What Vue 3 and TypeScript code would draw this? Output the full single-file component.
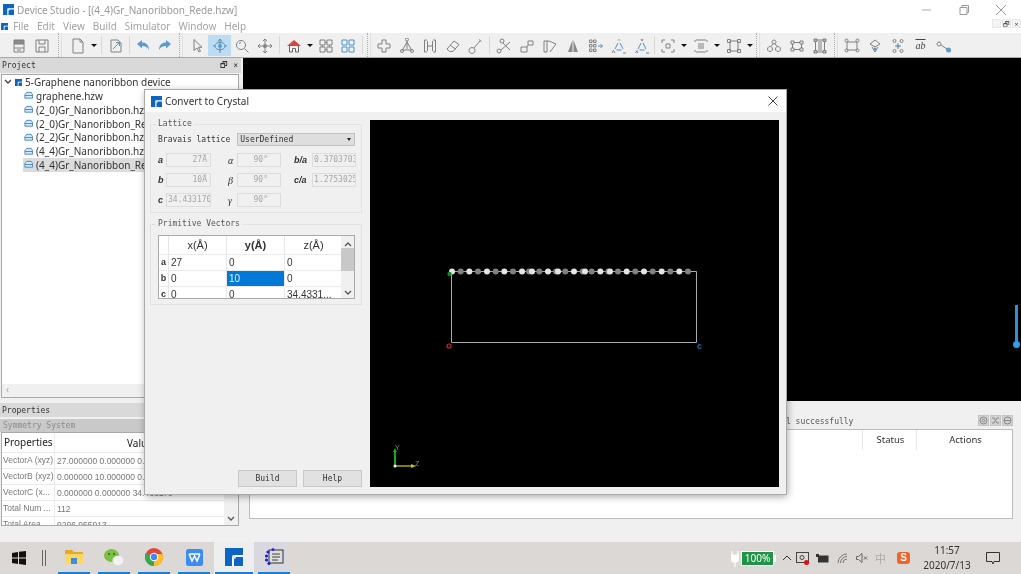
<script setup lang="ts">
type ToolItem = { k: 'b' | 'd' | 's' | 'g'; w: number; icon?: string; active?: boolean }

// 16x16 icon parts split by "|": grey stroke, blue stroke, blue fill, grey fill
const icons: Record<string, string> = {
  box: 'M3 2h10v12H3zM3 6h10M3 10h10M6 12h4|||M3 2h10v4H3z',
  save: 'M2 2h12v12H2zM5 2v4h6V2M5 14V9h6v5',
  doc: 'M3 1h7l3 3v11H3zM10 1v3h3',
  open: 'M3 2h7l3 3v9H3z|M5 11l6-6M8 4.500h3.500V8',
  undo: '||M2 6l5-4v2.500c4 0 7 2.500 7 7.500-1.500-3-3.500-4-7-4V10.500z',
  redo: '||M14 6L9 2v2.500c-4 0-7 2.500-7 7.500 1.500-3 3.500-4 7-4v2.500z',
  arrow: 'M5 1.500v11l3-2.500 2 4 1.500-.7-2-4h3.500z',
  rotate: 'M8 1v14M1 8h2M13 8h2M8 1L6 3.500M8 1l2 2.500|M3 8c0-5 10-5 10 0s-10 5-10 0z|M6 8a2 2 0 1 0 4 0a2 2 0 1 0-4 0z',
  zoom: 'M7 2.500a4.500 4.500 0 1 0 .01 0zM10.500 10.500l4 4|M5 6a2.500 2.500 0 0 1 2-1.500',
  move: 'M8 1v14M1 8h14M8 1L6 3M8 1l2 2M8 15l-2-2M8 15l2-2M1 8l2-2M1 8l2 2M15 8l-2-2M15 8l-2 2|||M6 8a2 2 0 1 0 4 0a2 2 0 1 0-4 0z',
  grid1: 'M2 2h5v5H2zM9 2h5v5H9zM2 9h5v5H2zM9 9h5v5H9zM7 4.500h2M7 11.500h2M4.500 7v2M11.500 7v2',
  grid2: '|M2 2h5v5H2zM9 2h5v5H9zM2 9h5v5H2zM9 9h5v5H9z',
  plus: 'M6 2h4v4h4v4h-4v4H6v-4H2V6h4z',
  mol: 'M8 3v8M8 4L3.500 12h9zM6.500 1.500a1.500 1.500 0 1 0 3 0a1.500 1.500 0 1 0-3 0M1.500 13a1.500 1.500 0 1 0 3 0a1.500 1.500 0 1 0-3 0M11.500 13a1.500 1.500 0 1 0 3 0a1.500 1.500 0 1 0-3 0',
  hh: 'M5 2H2.500v12H5M11 2h2.500v12H11M5.500 3v10M10.500 3v10M5.500 8h5',
  eraser: 'M2 11l7-8 5 3.500-6 7H4.500zM5.500 7.500l5 3.500',
  bond: 'M4 9.500a3 3 0 1 0 .01 0zM6 10l6-7M11 1.500l2.500 2',
  bond2: 'M1 13a2 2 0 1 0 4 0a2 2 0 1 0-4 0M5 12l9-8M4 3a2 2 0 1 0 4 0 2 2 0 1 0-4 0M7 5l7 7',
  sq2: 'M2 9h6v5H2zM9 3h5v4H9zM8 9l1-2',
  mirror: 'M2 3h3v11H2zM7 3l7 3-6 8M5 3h2',
  tri: '|||M7.500 2v12H3zM8.500 2v12H13z',
  spread: 'M1.500 2h2.500v2.500H1.500zM5.500 2H8v2.500H5.500zM1.500 6.500h2.500V9H1.500zM5.500 6.500H8V9H5.500zM1.500 11h2.500v2.500H1.500zM5.500 11H8v2.500H5.500z|M10 8h4.500M12.500 6l2 2-2 2',
  tria: 'M7 2.500l1-1 1 1M1 15l1.500-2.500 1.500 2.500M12 15h3|M7 5L4 11M9 5l3 6M5.500 12h5',
  triy: 'M7 1l1 2 1-2M1.500 15l2-2.500M2 12.500l2 2.500M12 15h3|M7 5L4 11M9 5l3 6M5.500 12h5',
  dash1: 'M2 2h3M11 2h3M2 14h3M11 14h3M2 2v3M14 2v3M2 11v3M14 11v3M6 6h4v4H6z',
  dash2: 'M3 2h10M3 14h10M2 2v2M14 2v2M2 12v2M14 12v2M5 6h6M5 8h6M5 10h6',
  frame: 'M4 3h8v10H4zM1.500 1.500h3v3h-3zM11.500 1.500h3v3h-3zM1.500 11.500h3v3h-3zM11.500 11.500h3v3h-3z',
  cluster: 'M8 2a2 2 0 1 0 .01 0zM4 8.500a2.500 2.500 0 1 0 .01 0zM12 8.500a2.500 2.500 0 1 0 .01 0zM7 5.500L5 8.500M9 5.500l2 3',
  hex: 'M2 3h3v3H2zM11 3h3v3h-3zM2 10h3v3H2zM11 10h3v3h-3zM5 4.500h6M5 11.500h6M3.500 6v4M12.500 6v4',
  pillars: 'M2 2h12M2 14h12M2 1h3v2.500H2zM11 1h3v2.500h-3zM2 12.500h3V15H2zM11 12.500h3V15h-3zM3.500 3.500v9M12.500 3.500v9M7 3v10M9 3v10',
  cell: 'M3 4h10v8H3zM1 2.500a1.500 1.500 0 1 0 3 0a1.500 1.500 0 1 0-3 0M12 2.500a1.500 1.500 0 1 0 3 0a1.500 1.500 0 1 0-3 0M1 12.500a1.500 1.500 0 1 0 3 0a1.500 1.500 0 1 0-3 0M12 12.500a1.500 1.500 0 1 0 3 0a1.500 1.500 0 1 0-3 0',
  bulb: 'M8 2L3 6l5 3 5-3zM5 9l3 5 3-5||M6.500 11a1.500 1.500 0 1 0 3 0a1.500 1.500 0 1 0-3 0',
  chain: 'M3 3a1.500 1.500 0 1 0 3 0a1.500 1.500 0 1 0-3 0M10 3a1.500 1.500 0 1 0 3 0a1.500 1.500 0 1 0-3 0M3 13a1.500 1.500 0 1 0 3 0a1.500 1.500 0 1 0-3 0M10 13a1.500 1.500 0 1 0 3 0a1.500 1.500 0 1 0-3 0M8 5v6M5 8h6||M6.500 8a1.500 1.500 0 1 0 3 0a1.500 1.500 0 1 0-3 0',
  key: 'M3 4a2 2 0 1 0 .01 0zM5 7l6 4||M10 12a2.500 2.500 0 1 0 5 0a2.500 2.500 0 1 0-5 0',
}

const b = (icon: string, w = 23, active = false): ToolItem => ({ k: 'b', w, icon, active })
const d = (w = 10): ToolItem => ({ k: 'd', w })
const s = (w: number): ToolItem => ({ k: 's', w })
const g = (w: number): ToolItem => ({ k: 'g', w })

const tools: ToolItem[] = [
  b('box'), b('save'), g(13), b('doc'), d(), s(5), b('open'), s(5), b('undo', 22), b('redo', 22), g(9),
  b('arrow'), b('rotate', 23, true), b('zoom', 22), b('move'), s(6), b('__home'), d(), b('grid1', 21), b('grid2'), s(6), g(7),
  b('plus'), b('mol'), b('hh'), b('eraser'), b('bond'), s(5),
  b('bond2'), b('sq2'), b('mirror'), b('tri'), b('spread'), b('tria'), b('triy'), s(3),
  b('dash1'), d(), b('dash2'), d(), b('frame'), d(9), g(8),
  b('cluster'), b('hex'), b('pillars'), g(9),
  b('cell'), b('bulb'), b('chain'), b('__ab'), b('key'),
]

const part = (name: string | undefined, i: number) => (icons[name ?? ''] ?? '').split('|')[i] ?? ''

const menus = ['File', 'Edit', 'View', 'Build', 'Simulator', 'Window', 'Help']
const files = [
  'graphene.hzw',
  '(2_0)Gr_Nanoribbon.hzw',
  '(2_0)Gr_Nanoribbon_Rede.hzw',
  '(2_2)Gr_Nanoribbon.hzw',
  '(4_4)Gr_Nanoribbon.hzw',
  '(4_4)Gr_Nanoribbon_Rede.hzw',
]
const props = [
  ['VectorA (xyz)', '27.000000 0.000000 0.000000'],
  ['VectorB (xyz)', '0.000000 10.000000 0.000000'],
  ['VectorC (x...', '0.000000 0.000000 34.433170'],
  ['Total Num ...', '112'],
  ['Total Area', '9296.955913'],
]
const lattice = [
  { l: 'a', v: '27Å', g: 'α', gv: '90°', r: 'b/a', rv: '0.3703703' },
  { l: 'b', v: '10Å', g: 'β', gv: '90°', r: 'c/a', rv: '1.2753025' },
  { l: 'c', v: '34.433170', g: 'γ', gv: '90°', r: '', rv: '' },
]
const vectors = [
  { h: 'a', c: ['27', '0', '0'] },
  { h: 'b', c: ['0', '10', '0'] },
  { h: 'c', c: ['0', '0', '34.4331...'] },
]

// atoms along the top edge of the cell, in screen px
const bright = [452, 469.300, 487, 504.300, 522, 532, 548, 558, 574, 585, 600.300, 610, 626.700, 644, 661.700, 679.300]
const dim = [460.700, 478, 495.700, 513, 529, 539.300, 556, 565.300, 582.700, 591.700, 608.300, 618, 635.300, 652.700, 670.300, 688]

const taskLines = [
  { x: 58, w: 32 }, { x: 98, w: 32 }, { x: 138, w: 32 }, { x: 178, w: 32 }, { x: 215, w: 38 }, { x: 258, w: 32 },
]
</script>

<template>
  <div class="app">
    <svg width="0" height="0" class="defs" aria-hidden="true">
      <symbol id="logo" viewBox="0 0 18 18">
        <rect width="18" height="18" fill="#0b66c3" />
        <path d="M8 18v-8.500a1.500 1.500 0 0 1 1.500-1.500H18" fill="none" stroke="#fff" stroke-width="2" />
        <circle cx="9" cy="9" r="2" fill="#cfe6fb" />
      </symbol>
    </svg>

    <header class="titlebar">
      <svg class="logo" width="11" height="11"><use href="#logo" /></svg>
      <span class="title">Device Studio - [(4_4)Gr_Nanoribbon_Rede.hzw]</span>
      <div class="winctl">
        <svg width="12" height="12" viewBox="0 0 12 12"><path d="M1 6h9" stroke="#aaa" fill="none" /></svg>
        <svg width="12" height="12" viewBox="0 0 12 12"><path d="M2 3.500h7v7H2zM4 3.500V1.500h6.500v7H9" stroke="#999" fill="none" /></svg>
        <svg width="12" height="12" viewBox="0 0 12 12"><path d="M1 1l10 10M11 1L1 11" stroke="#999" fill="none" /></svg>
      </div>
    </header>

    <nav class="menubar">
      <svg class="menu-logo" width="7" height="7"><use href="#logo" /></svg>
      <span v-for="m in menus" :key="m" class="menu">{{ m }}</span>
      <div class="mdi">
        <span>_</span><span>🗗</span><span>×</span>
      </div>
    </nav>

    <div class="toolbar">
      <template v-for="(t, i) in tools" :key="i">
        <div v-if="t.k === 'b'" class="tbtn" :class="{ active: t.active }" :style="{ width: t.w + 'px' }">
          <svg v-if="t.icon === '__home'" width="16" height="16" viewBox="0 0 16 16">
            <path d="M1 8l7-6 7 6z" fill="#d9433f" />
            <path d="M3.500 8v6h3v-3.500h3V14h3V8" fill="none" stroke="#666" />
          </svg>
          <span v-else-if="t.icon === '__ab'" class="ab">ab</span>
          <svg v-else width="16" height="16" viewBox="0 0 16 16" fill="none">
            <path :d="part(t.icon, 3)" fill="#8a8a8a" />
            <path :d="part(t.icon, 0)" stroke="#808080" />
            <path :d="part(t.icon, 1)" stroke="#4f93c9" />
            <path :d="part(t.icon, 2)" fill="#5a9bd0" />
          </svg>
        </div>
        <div v-else-if="t.k === 'd'" class="tdrop" :style="{ width: t.w + 'px' }"><i></i></div>
        <div v-else-if="t.k === 's'" class="tsep" :style="{ width: t.w + 'px' }"><i></i></div>
        <div v-else class="tgrip" :style="{ width: t.w + 'px' }"><i></i></div>
      </template>
    </div>

    <main class="main">
      <aside class="left">
        <div class="dock-head">
          <span>Project</span>
          <span class="dock-btns">🗗 ×</span>
        </div>
        <div class="tree">
          <div class="tree-body">
            <div class="root-row">
              <svg width="8" height="6" viewBox="0 0 8 6"><path d="M1 1l3 3 3-3" fill="none" stroke="#444" stroke-width="1.300" /></svg>
              <svg width="7" height="7"><use href="#logo" /></svg>
              <span>5-Graphene nanoribbon device</span>
            </div>
            <div v-for="(f, i) in files" :key="f" class="file-row" :class="{ sel: i === files.length - 1 }">
              <svg width="9" height="9" viewBox="0 0 10 9">
                <path d="M1 3.500L3 1h5l1.500 2.500v4h-8.500z" fill="#d8e8f6" stroke="#3f86c6" />
                <path d="M1 4.500h8.500" stroke="#3f86c6" />
              </svg>
              <span>{{ f }}</span>
            </div>
          </div>
          <div class="hscroll"><span>‹</span></div>
        </div>

        <div class="dock-head prop-head"><span>Properties</span></div>
        <div class="sym">Symmetry System</div>
        <div class="ptable">
          <div class="phead">
            <span class="pc1">Properties</span>
            <span class="pc2 center">Value</span>
          </div>
          <div v-for="p in props" :key="p[0]" class="prow">
            <span class="pc1">{{ p[0] }}</span>
            <span class="pc2">{{ p[1] }}</span>
          </div>
          <div class="pscroll">
            <svg width="8" height="6" viewBox="0 0 8 6"><path d="M1 1l3 3 3-3" fill="none" stroke="#555" stroke-width="1.300" /></svg>
          </div>
        </div>
      </aside>

      <section class="center-col">
        <div class="scene"></div>
        <div class="output">
          <div class="status">
            <span class="status-text">Import model successfully</span>
            <div class="mini">
              <i><svg width="9" height="9" viewBox="0 0 9 9"><circle cx="4.500" cy="4.500" r="3.500" fill="none" stroke="#888" /><circle cx="4.500" cy="4.500" r="1.300" fill="none" stroke="#888" /></svg></i>
              <i><svg width="9" height="9" viewBox="0 0 9 9"><path d="M1 2h2l3 5h2M1 7h2l3-5h2" fill="none" stroke="#888" /></svg></i>
              <i><svg width="9" height="9" viewBox="0 0 9 9"><circle cx="4.500" cy="4.500" r="3.500" fill="none" stroke="#888" /><path d="M1.500 4.500h6" stroke="#888" /></svg></i>
            </div>
          </div>
          <div class="jobs">
            <div class="jobs-head">
              <span class="job-status">Status</span>
              <span class="job-actions">Actions</span>
            </div>
          </div>
        </div>
      </section>
    </main>

    <footer class="taskbar">
      <div class="task-left">
        <svg class="win" width="14" height="14" viewBox="0 0 14 14"><path d="M0 2l6-1v5.500H0zM7 .8L14 0v6.500H7zM0 7.500h6V13l-6-1zM7 7.500h7V14l-7-1z" fill="#111" /></svg>
        <i class="task-div"></i>
        <div class="task-app">
          <svg width="18" height="16" viewBox="0 0 18 16"><path d="M0 1h7l2 2h9v12H0z" fill="#e6a92e" /><path d="M0 5h18v10H0z" fill="#fbd765" /><path d="M6 15V9h6v6z" fill="#3c8ed8" /></svg>
        </div>
        <div class="task-app">
          <svg width="20" height="17" viewBox="0 0 20 17"><ellipse cx="7.500" cy="6.500" rx="7.500" ry="6.500" fill="#7bc043" /><ellipse cx="14" cy="11.500" rx="5.500" ry="4.800" fill="#f2f2f2" /><circle cx="5" cy="5" r="1" fill="#2e6b12" /><circle cx="10" cy="5" r="1" fill="#2e6b12" /></svg>
        </div>
        <div class="task-app">
          <svg width="18" height="18" viewBox="0 0 18 18">
            <circle cx="9" cy="9" r="9" fill="#e3453a" />
            <path d="M9 9V18A9 9 0 0 0 17.500 6H9z" fill="#fbc02d" />
            <path d="M9 9L9 18A9 9 0 0 1 .9 5z" fill="#36a853" />
            <circle cx="9" cy="9" r="4.200" fill="#fff" />
            <circle cx="9" cy="9" r="3.200" fill="#4285f4" />
          </svg>
        </div>
        <div class="task-app">
          <svg width="17" height="17" viewBox="0 0 17 17"><rect width="17" height="17" rx="2.500" fill="#3c8cf5" /><path d="M3 5l3 7 2.500-5 2.500 5 3-7M3 5h11" fill="none" stroke="#fff" stroke-width="1.500" /></svg>
        </div>
        <div class="task-app current">
          <svg width="18" height="18"><use href="#logo" /></svg>
        </div>
        <div class="task-app open">
          <svg width="20" height="18" viewBox="0 0 20 18">
            <rect x="5" y="2" width="14" height="13" fill="#ddd" stroke="#333" />
            <path d="M8 6h8M8 9h8M8 12h6" stroke="#444" />
            <circle cx="4" cy="4" r="1.600" fill="#1a1af0" /><circle cx="2.500" cy="8" r="1.600" fill="#1a1af0" /><circle cx="2.500" cy="12" r="1.600" fill="#1a1af0" /><circle cx="5" cy="15.500" r="1.600" fill="#1a1af0" /><circle cx="9" cy="1.600" r="1.400" fill="#1a1af0" />
          </svg>
        </div>
        <i v-for="l in taskLines" :key="l.x" class="task-line" :style="{ left: l.x + 'px', width: l.w + 'px' }"></i>
      </div>

      <div class="tray">
        <svg width="8" height="17" viewBox="0 0 8 17"><path d="M1 1v4M7 1v4M0 5h8v5l-2 2H2L0 10zM4 12v5" fill="#fff" stroke="#fff" stroke-width="1.200" /></svg>
        <div class="battery"><span>100%</span></div>
        <svg class="t-chev" width="10" height="6" viewBox="0 0 10 6"><path d="M1 5l4-4 4 4" fill="none" stroke="#333" /></svg>
        <svg class="t-cam" width="14" height="13" viewBox="0 0 14 13"><rect x=".5" y=".5" width="12" height="10" fill="none" stroke="#444" /><circle cx="6" cy="5.500" r="2" fill="none" stroke="#444" /><circle cx="10.500" cy="10.500" r="2.500" fill="#e01010" /></svg>
        <svg class="t-bat" width="13" height="9" viewBox="0 0 13 9"><rect x="2" y="1.500" width="10.500" height="7" fill="#333" /><path d="M0 0h3v3H0z" fill="#333" /></svg>
        <svg class="t-wifi" width="12" height="11" viewBox="0 0 12 11"><path d="M1 10a9 9 0 0 1 9-9M3.500 10a6.500 6.500 0 0 1 6.500-6.500M6 10a4 4 0 0 1 4-4" fill="none" stroke="#777" /></svg>
        <svg class="t-vol" width="12" height="10" viewBox="0 0 12 10"><path d="M0.500 3.500h2L6 .5v9l-3.500-3h-2zM8 3.500l3 3M11 3.500l-3 3" fill="none" stroke="#666" /></svg>
        <span class="t-ime">中</span>
        <span class="t-sogou">S</span>
        <div class="clock"><span>11:57</span><span>2020/7/13</span></div>
        <svg class="t-note" width="14" height="13" viewBox="0 0 14 13"><path d="M.5 .5h13v9H8l-1 2.500-1-2.500H.5z" fill="none" stroke="#333" /></svg>
      </div>
    </footer>

    <div class="side-slider"><i></i></div>

    <section class="dialog">
      <div class="dlg-title">
        <svg width="11" height="11"><use href="#logo" /></svg>
        <span>Convert to Crystal</span>
        <svg class="dlg-x" width="10" height="10" viewBox="0 0 10 10"><path d="M.5 .5l9 9M9.500 .5l-9 9" stroke="#444" fill="none" /></svg>
      </div>
      <div class="dlg-body">
        <div class="dlg-left">
          <fieldset class="group">
            <legend>Lattice</legend>
            <div class="bravais">
              <span>Bravais lattice</span>
              <div class="combo"><span>UserDefined</span><i></i></div>
            </div>
            <div class="lat-grid">
              <div v-for="r in lattice" :key="r.l" class="lat-row">
                <em class="lab">{{ r.l }}</em>
                <span class="inp i1">{{ r.v }}</span>
                <em class="lab g">{{ r.g }}</em>
                <span class="inp i2">{{ r.gv }}</span>
                <em class="lab rr">{{ r.r }}</em>
                <span v-if="r.rv" class="inp i3">{{ r.rv }}</span>
              </div>
            </div>
          </fieldset>

          <fieldset class="group vec">
            <legend>Primitive Vectors</legend>
            <div class="vtable">
              <div class="vmain">
                <div class="vrow vhead">
                  <span class="vh"></span>
                  <span class="vc">x(Å)</span>
                  <span class="vc bold">y(Å)</span>
                  <span class="vc">z(Å)</span>
                </div>
                <div v-for="(v, r) in vectors" :key="v.h" class="vrow">
                  <span class="vh">{{ v.h }}</span>
                  <span v-for="(c, i) in v.c" :key="i" class="vc val" :class="{ picked: r === 1 && i === 1 }">{{ c }}</span>
                </div>
              </div>
              <div class="vscroll">
                <svg width="8" height="6" viewBox="0 0 8 6"><path d="M1 5l3-3 3 3" fill="none" stroke="#555" stroke-width="1.300" /></svg>
                <i></i>
                <svg width="8" height="6" viewBox="0 0 8 6"><path d="M1 1l3 3 3-3" fill="none" stroke="#555" stroke-width="1.300" /></svg>
              </div>
            </div>
          </fieldset>

          <div class="dlg-actions">
            <button type="button">Build</button>
            <button type="button">Help</button>
          </div>
        </div>

        <div class="viewer">
          <svg width="409" height="367" viewBox="370 120 409 367">
            <path d="M451.500 271.500H696.500V342.500H451.500Z" fill="none" stroke="#aaa" />
            <circle v-for="x in dim" :key="'d' + x" :cx="x" cy="271.500" r="3" fill="#808080" />
            <circle v-for="x in bright" :key="'b' + x" :cx="x" cy="271.500" r="3" fill="#e4e4e4" />
            <circle cx="449.500" cy="274" r="2.200" fill="#0c8a1e" />
            <circle cx="449" cy="346" r="2" fill="none" stroke="#c02a2a" stroke-width="1.200" />
            <text x="697" y="349" class="lbl" fill="#1668a8">c</text>
            <path d="M395 466V451" stroke="#0fae1a" stroke-width="2" />
            <path d="M393 452l2-4 2 4z" fill="#0fae1a" />
            <path d="M395 466h17" stroke="#a8a800" stroke-width="1.500" />
            <path d="M411 464l5 2-5 2z" fill="#c8c800" />
            <circle cx="395" cy="466" r="1.500" fill="#fff" />
            <text x="395" y="450" class="axis">Y</text>
            <text x="415" y="466" class="axis">Z</text>
          </svg>
        </div>
      </div>
    </section>
  </div>
</template>

<style>
html, body { margin: 0; overflow: hidden; }
</style>

<style scoped>
.app {
  position: relative;
  width: 1021px;
  height: 574px;
  overflow: hidden;
  display: flex;
  flex-direction: column;
  background: #f0f0f0;
  font-family: "Noto Sans", "Noto Sans CJK SC", sans-serif;
  color: #333;
  filter: blur(0.45px);
}
.defs { position: absolute; }

.titlebar {
  height: 19px;
  background: #fff;
  display: flex;
  align-items: center;
  padding-left: 3px;
  gap: 3px;
  font-size: 10px;
  color: #999;
}
.title { letter-spacing: -0.05px; }
.winctl {
  margin-left: auto;
  display: flex;
  gap: 25px;
  padding-right: 14px;
}

.menubar {
  height: 14px;
  background: #fff;
  display: flex;
  align-items: center;
  font-size: 10px;
  color: #a3a3a3;
  padding-left: 1px;
}
.menu-logo { margin-right: 5px; }
.menu { margin-right: 8px; }
.mdi {
  margin-left: auto;
  display: flex;
  gap: 1px;
  align-self: flex-start;
}
.mdi span {
  width: 9px;
  height: 9px;
  font-size: 7px;
  line-height: 9px;
  text-align: center;
  color: #555;
  background: #f4f4f4;
  border: 1px solid #e8e8e8;
  box-sizing: border-box;
  overflow: hidden;
}

.toolbar {
  height: 25px;
  box-sizing: border-box;
  padding-left: 7px;
  display: flex;
  align-items: stretch;
  background: #f0f0f0;
  border-bottom: 1px solid #a8a8a8;
}
.tbtn {
  display: flex;
  align-items: center;
  justify-content: center;
  margin: 2px 0 1px;
}
.tbtn.active { background: #bcdcf4; }
.ab {
  font: italic 10px "Liberation Serif", serif;
  color: #444;
  text-decoration: overline;
}
.tdrop { display: flex; align-items: center; justify-content: center; padding-top: 1px; }
.tdrop i {
  border: 3px solid transparent;
  border-top: 3px solid #111;
  border-bottom: 0;
  width: 0;
  height: 0;
}
.tsep, .tgrip { display: flex; justify-content: center; }
.tsep i { width: 1px; margin: 3px 0; background: #d8d8d8; }
.tgrip i { width: 2px; border-left: 1px dotted #aaa; border-right: 1px solid #e0e0e0; }

.main {
  flex: 1;
  min-height: 0;
  display: flex;
}
.left {
  width: 243px;
  flex: none;
  padding-right: 2px;
  box-sizing: border-box;
}
.dock-head {
  height: 15px;
  background: #d9d9d9;
  display: flex;
  justify-content: space-between;
  align-items: center;
  padding: 0 3px 0 2px;
  font: 8px/15px "DejaVu Sans Mono", monospace;
  color: #333;
}
.dock-btns { font-size: 8px; color: #333; }
.tree {
  margin: 1px 2px 0 1px;
  height: 324px;
  box-sizing: border-box;
  border: 1px solid #a9a9a9;
  background: #fff;
  display: flex;
  flex-direction: column;
  font-size: 10px;
}
.tree-body { flex: 1; overflow: hidden; }
.root-row {
  height: 14px;
  display: flex;
  align-items: center;
  gap: 3px;
  padding-left: 2px;
  white-space: nowrap;
}
.file-row {
  height: 13.800px;
  display: flex;
  align-items: center;
  gap: 3px;
  margin-left: 21px;
  padding-left: 1px;
  white-space: nowrap;
}
.file-row.sel { background: #dcdcdc; }
.hscroll {
  height: 13px;
  background: #f0f0f0;
  color: #aaa;
  font-size: 10px;
  line-height: 11px;
  padding-left: 4px;
}
.prop-head { margin-top: 5px; height: 14px; }
.sym {
  margin-top: 2px;
  height: 13px;
  background: #c9c9c9;
  font: 8px/13px "DejaVu Sans Mono", monospace;
  color: #8a8a8a;
  padding-left: 3px;
}
.ptable {
  position: relative;
  margin: 0 2px 0 1px;
  height: 94px;
  box-sizing: border-box;
  border: 1px solid #a9a9a9;
  background: #fff;
  overflow: hidden;
  font: 8.500px "Liberation Sans", sans-serif;
  color: #777;
}
.phead {
  display: flex;
  height: 19px;
  align-items: center;
  font: 10px "Noto Sans", sans-serif;
  color: #222;
}
.prow {
  display: flex;
  height: 16px;
  align-items: center;
  border-top: 1px solid #eaeaea;
  box-sizing: border-box;
  white-space: nowrap;
}
.pc1 {
  width: 53px;
  flex: none;
  padding-left: 1px;
  box-sizing: border-box;
  border-right: 1px solid #eaeaea;
  line-height: 15px;
  overflow: hidden;
}
.phead .pc1 { padding-left: 2px; height: 19px; line-height: 19px; }
.pc2 { padding-left: 2px; }
.pc2.center { padding-left: 72px; }
.pscroll {
  position: absolute;
  right: 0;
  top: 0;
  bottom: 0;
  width: 14px;
  background: #f0f0f0;
  display: flex;
  align-items: flex-end;
  justify-content: center;
  padding-bottom: 3px;
  box-sizing: border-box;
}

.center-col {
  flex: 1;
  min-width: 0;
  display: flex;
  flex-direction: column;
}
.scene { height: 343px; background: #000; flex: none; }
.output { flex: 1; padding: 0 8px 0 6px; }
.status {
  height: 28px;
  display: flex;
  align-items: center;
  justify-content: space-between;
  box-sizing: border-box;
  padding: 13px 0 0 484px;
  font: 8px "DejaVu Sans Mono", monospace;
  color: #555;
}
.status-text { white-space: nowrap; }
.mini { display: flex; gap: 1px; margin-top: -3px; }
.mini i {
  width: 11px;
  height: 11px;
  background: #d2d2d2;
  border: 1px solid #c4c4c4;
  box-sizing: border-box;
  display: flex;
}
.jobs {
  height: 90px;
  box-sizing: border-box;
  border: 1px solid #bcbcbc;
  background: #fff;
}
.jobs-head {
  height: 20px;
  display: flex;
  justify-content: flex-end;
  font-size: 9.500px;
  line-height: 20px;
  color: #333;
  text-align: center;
}
.job-status { width: 54px; border-left: 1px solid #e6e6e6; padding-left: 2px; box-sizing: border-box; }
.job-actions { width: 96px; border-left: 1px solid #e6e6e6; padding-left: 2px; box-sizing: border-box; }

.taskbar {
  height: 32px;
  flex: none;
  background: #dbd8d6;
  display: flex;
  justify-content: space-between;
}
.task-left {
  position: relative;
  display: flex;
  align-items: center;
  height: 32px;
}
.win { margin-left: 12px; }
.task-div { width: 2px; height: 16px; margin: 0 8px 0 16px; border-left: 1px solid #666; border-right: 1px solid #666; box-sizing: content-box; }
.task-app {
  width: 40px;
  height: 32px;
  display: flex;
  align-items: center;
  justify-content: center;
  padding-bottom: 2px;
  box-sizing: border-box;
}
.task-app.current { background: #eeeeef; }
.task-app.open { background: #d8d8de; width: 36px; padding-left: 3px; }
.task-line {
  position: absolute;
  bottom: 0;
  height: 2px;
  background: #1c7ed6;
}
.tray {
  display: flex;
  align-items: center;
  position: relative;
  padding-right: 21px;
}
.battery {
  position: relative;
  width: 33px;
  height: 15px;
  margin-left: 2px;
  box-sizing: border-box;
  border: 1px solid #fff;
  background: #1f9447;
  color: #fff;
  font-size: 10px;
  line-height: 13px;
  text-align: center;
}
.battery::after {
  content: "";
  position: absolute;
  right: -3px;
  top: 3px;
  width: 2px;
  height: 7px;
  background: #fff;
}
.t-chev { margin-left: 8px; }
.t-cam { margin-left: 4px; }
.t-bat { margin-left: 6px; }
.t-wifi { margin-left: 8px; }
.t-vol { margin-left: 7px; }
.t-ime { margin-left: 7px; font: 11px "Noto Sans CJK SC", sans-serif; color: #aaa; }
.t-sogou {
  margin-left: 11px;
  width: 13px;
  height: 12px;
  border-radius: 3px;
  background: #f0642c;
  color: #fff;
  font: bold 10px/12px "Liberation Sans", sans-serif;
  text-align: center;
}
.clock {
  width: 60px;
  margin-left: 7px;
  display: flex;
  flex-direction: column;
  align-items: center;
  font-size: 10px;
  line-height: 15px;
  color: #333;
}
.t-note { margin-left: 9px; }

.side-slider {
  position: absolute;
  left: 1015px;
  top: 305px;
  width: 3px;
  height: 40px;
  background: #2f8fd8;
}
.side-slider i {
  position: absolute;
  left: -2px;
  bottom: -3px;
  width: 7px;
  height: 7px;
  border-radius: 50%;
  background: #2f9fe8;
}

.dialog {
  position: absolute;
  left: 145px;
  top: 90px;
  width: 641px;
  height: 404px;
  background: #f0f0f0;
  display: flex;
  flex-direction: column;
  box-shadow: 0 0 0 1px #aaa, 1px 2px 8px rgba(0, 0, 0, 0.4);
}
.dlg-title {
  height: 22px;
  flex: none;
  background: #fff;
  display: flex;
  align-items: center;
  gap: 3px;
  padding-left: 6px;
  font-size: 10px;
  color: #333;
}
.dlg-x { margin-left: auto; margin-right: 8px; }
.dlg-body {
  flex: 1;
  min-height: 0;
  display: flex;
  padding: 8px 7px 7px 5px;
}
.dlg-left {
  width: 212px;
  flex: none;
  margin-right: 8px;
  display: flex;
  flex-direction: column;
  font-family: "DejaVu Sans Mono", monospace;
  font-size: 8px;
}
.group {
  margin: 0;
  padding: 0;
  border: 1px solid #e2e2e2;
  height: 93px;
  box-sizing: border-box;
  min-width: 0;
}
.group legend {
  margin-left: 5px;
  padding: 0 2px;
  color: #555;
  line-height: 8px;
}
.vec { height: 85px; margin-top: 7px; }
.bravais {
  display: flex;
  align-items: center;
  height: 13px;
  margin: 5px 0 0 7px;
  color: #333;
}
.combo {
  width: 118px;
  margin-left: 7px;
  height: 13px;
  box-sizing: border-box;
  background: #dedede;
  border: 1px solid #c0c0c0;
  display: flex;
  align-items: center;
  justify-content: space-between;
  padding: 0 3px 0 2px;
}
.combo i {
  border: 2px solid transparent;
  border-top: 3px solid #222;
  border-bottom: 0;
}
.lat-grid { margin-top: 4px; }
.lat-row {
  display: flex;
  align-items: center;
  height: 20px;
  padding-left: 7px;
}
.lab {
  font: italic bold 9px "Liberation Sans", sans-serif;
  color: #333;
  width: 8px;
}
.lab.g { width: 9px; margin-left: 17px; font-weight: 400; font-family: "Liberation Serif", serif; font-size: 10px; }
.lab.rr { width: 18px; margin-left: 13px; white-space: nowrap; }
.inp {
  height: 14px;
  box-sizing: border-box;
  border: 1px solid #dcdcdc;
  color: #a6a6a6;
  line-height: 12px;
  text-align: right;
  padding-right: 3px;
  white-space: nowrap;
  overflow: hidden;
}
.i1 { width: 45px; }
.i2 { width: 44px; padding-right: 12px; }
.i3 { width: 44px; text-align: left; padding: 0 0 0 1px; }
.lat-row:last-child .i1 { text-align: left; padding: 0 0 0 1px; }

.vtable {
  margin: 7px 6px 0 7px;
  height: 64px;
  box-sizing: border-box;
  border: 1px solid #aaa;
  background: #fff;
  display: flex;
  overflow: hidden;
  font-family: "Liberation Sans", sans-serif;
}
.vmain { flex: 1; min-width: 0; overflow: hidden; }
.vrow {
  display: flex;
  height: 16px;
  box-sizing: border-box;
  font-size: 10px;
  line-height: 15px;
  color: #333;
  border-bottom: 1px solid #eaeaea;
}
.vhead { height: 19px; line-height: 18px; font-size: 11px; }
.vh {
  width: 10px;
  flex: none;
  border-right: 1px solid #e6e6e6;
  text-align: center;
  font-weight: 700;
  font-size: 9px;
  overflow: hidden;
  box-sizing: border-box;
}
.vc {
  flex: 0 0 58px;
  box-sizing: border-box;
  border-right: 1px solid #e6e6e6;
  text-align: center;
  white-space: nowrap;
  overflow: hidden;
}
.vc.bold { font-weight: 700; }
.vc.val { text-align: left; padding-left: 2px; }
.vc.picked { background: #0078d7; color: #e8f3fc; }
.vscroll {
  width: 13px;
  flex: none;
  background: #f0f0f0;
  display: flex;
  flex-direction: column;
  align-items: center;
  justify-content: space-between;
  padding: 5px 0 2px;
  box-sizing: border-box;
}
.vscroll i {
  width: 13px;
  height: 23px;
  background: #c8c8c8;
  margin-top: 1px;
  margin-bottom: auto;
}
.dlg-actions {
  margin-top: auto;
  display: flex;
  justify-content: flex-end;
  gap: 6px;
}
.dlg-actions button {
  width: 59px;
  height: 17px;
  padding: 0;
  background: #e1e1e1;
  border: 1px solid #c8c8c8;
  font: 8px "DejaVu Sans Mono", monospace;
  color: #333;
}
.viewer {
  width: 409px;
  height: 367px;
  flex: none;
  background: #000;
}
.viewer svg { display: block; }
.lbl { font: bold 9px "Liberation Sans", sans-serif; }
.axis { font: 7px "Liberation Sans", sans-serif; fill: #888; }
</style>
